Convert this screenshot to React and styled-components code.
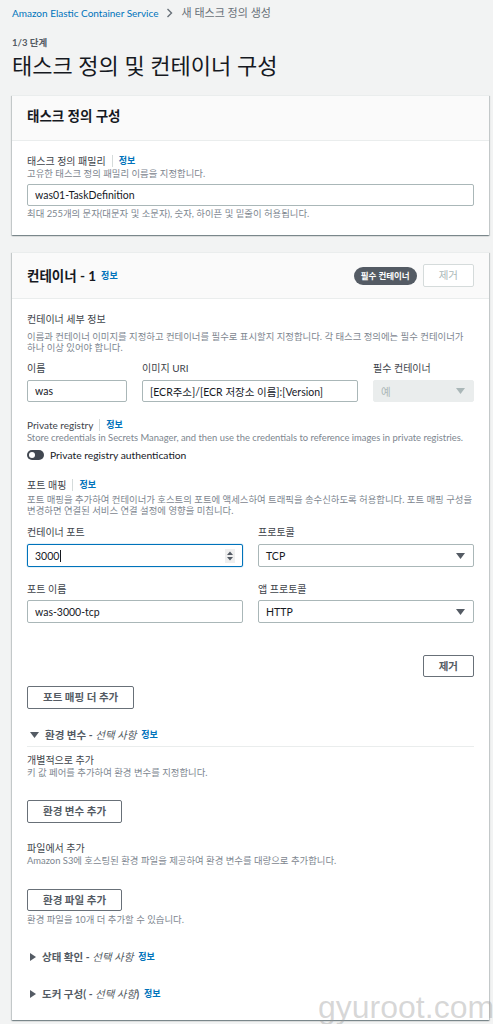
import React from 'react'
import styled, { createGlobalStyle } from 'styled-components'

const GlobalStyle = createGlobalStyle`
  html, body {
    margin: 0;
    padding: 0;
    background: #f2f3f3;
  }
  body {
    font-family: Lato, "Noto Sans CJK KR", sans-serif;
    color: #16191f;
  }
  * {
    box-sizing: border-box;
  }
`

const Page = styled.div`
  position: relative;
  padding: 7px 4px 6px 12px;
  min-height: 1024px;
  overflow: hidden;
`

const Breadcrumb = styled.nav`
  display: flex;
  align-items: center;
  gap: 8px;
  font-size: 10px;
  line-height: 12px;
`

const Crumb = styled.a`
  color: #0073bb;
  text-decoration: none;
`

const CurrentCrumb = styled.span`
  color: #687078;
  font-size: 11px;
`

const Step = styled.div`
  margin-top: 18px;
  font-size: 9.5px;
  line-height: 12px;
  font-weight: 700;
  color: #545b64;
`

const Title = styled.h1`
  margin: 4px 0 0;
  font-size: 22px;
  line-height: 26px;
  font-weight: 400;
  color: #16191f;
`

const Panel = styled.section`
  margin-top: ${p => p.$mt}px;
  background: #fff;
  border-top: 1px solid #eaeded;
  box-shadow: 0 1px 1px 0 rgba(0, 28, 36, 0.3), 1px 1px 1px 0 rgba(0, 28, 36, 0.15),
    -1px 1px 1px 0 rgba(0, 28, 36, 0.15);
`

const PanelHeader = styled.header`
  display: flex;
  align-items: center;
  height: ${p => p.$h}px;
  padding: 0 15px ${p => p.$pb || 0}px;
  background: #fafafa;
  border-bottom: 1px solid #eaeded;
`

const PanelTitle = styled.h2`
  margin: 0;
  font-size: ${p => p.$size || 13.5}px;
  line-height: 18px;
  font-weight: 700;
  color: #16191f;
`

const HeaderActions = styled.div`
  margin-left: auto;
  display: flex;
  align-items: center;
  gap: 6px;
`

const Badge = styled.span`
  height: 18px;
  padding: 0 7px;
  border-radius: 9px;
  background: #545b64;
  color: #fff;
  font-size: 8.5px;
  font-weight: 700;
  line-height: 18px;
`

const PanelBody = styled.div`
  padding: 14px 15px ${p => p.$pb || 15}px;
`

const Label = styled.div`
  display: flex;
  align-items: center;
  margin-top: ${p => p.$mt || 0}px;
  font-size: 10px;
  line-height: 12px;
  color: #3d434a;
`

const Info = styled.a`
  margin-left: ${p => (p.$plain ? 5 : 6)}px;
  padding-left: ${p => (p.$plain ? 0 : 6)}px;
  border-left: ${p => (p.$plain ? 'none' : '1px solid #d5dbdb')};
  color: #0073bb;
  font-size: 9px;
  font-weight: 700;
  font-style: normal;
  line-height: 12px;
  text-decoration: none;
`

const Desc = styled.p`
  margin: ${p => p.$mt || 0}px 0 0;
  font-size: 9.4px;
  line-height: ${p => p.$lh || 12}px;
  color: #7d868f;
  word-break: break-all;
`

const TextInput = styled.input`
  display: block;
  width: 100%;
  height: ${p => p.$h || 22}px;
  margin-top: ${p => p.$mt || 0}px;
  padding: 0 7px;
  border: 1px solid #aab7b8;
  border-radius: 2px;
  background: #fff;
  font-family: inherit;
  font-size: 10.5px;
  color: #16191f;
  outline: none;
`

const FocusField = styled.div`
  display: flex;
  align-items: center;
  height: 23px;
  margin-top: 6px;
  padding: 0 7px;
  border: 1px solid #0073bb;
  border-radius: 2px;
  box-shadow: 0 0 1px 0 #0073bb;
  font-size: 10.5px;
`

const Caret = styled.span`
  width: 1px;
  height: 12px;
  margin-left: 1px;
  background: #16191f;
`

const Spinner = styled.span`
  display: flex;
  align-items: center;
  justify-content: center;
  margin-left: auto;
  width: 10px;
  height: 14px;
  background: #efefef;
`

const SelectBox = styled.div`
  display: flex;
  align-items: center;
  height: ${p => p.$h || 23}px;
  margin-top: ${p => p.$mt || 0}px;
  padding: 0 8px 0 7px;
  border: 1px solid ${p => (p.$disabled ? '#eaeded' : '#aab7b8')};
  border-radius: 2px;
  background: ${p => (p.$disabled ? '#eaeded' : '#fff')};
  color: ${p => (p.$disabled ? '#aab7b8' : '#16191f')};
  font-size: 10.5px;

  svg {
    margin-left: auto;
  }
`

const Grid = styled.div`
  display: grid;
  grid-template-columns: ${p => p.$cols};
  column-gap: 15px;
  margin-top: ${p => p.$mt}px;
`

const ToggleRow = styled.div`
  display: flex;
  align-items: center;
  gap: 6px;
  margin-top: 4px;
  font-size: 10.3px;
  line-height: 14px;
  color: #16191f;
`

const Toggle = styled.span`
  display: flex;
  align-items: center;
  width: 17px;
  height: 10px;
  padding: 0 2px;
  border-radius: 5px;
  background: #414750;

  &::before {
    content: '';
    width: 6px;
    height: 6px;
    border-radius: 50%;
    background: #fff;
  }
`

const Button = styled.button`
  display: block;
  height: ${p => p.$h || 23}px;
  margin: ${p => p.$mt || 0}px 0 0 ${p => (p.$right ? 'auto' : '0')};
  padding: 0 15px;
  border: 1px solid ${p => (p.$disabled ? '#d5dbdb' : '#687078')};
  border-radius: 2px;
  background: #fff;
  color: ${p => (p.$disabled ? '#aab7b8' : '#545b64')};
  font-family: inherit;
  font-size: 10.5px;
  font-weight: ${p => (p.$disabled ? 400 : 700)};
  line-height: 1;
  cursor: pointer;
`

const Expander = styled.div`
  display: flex;
  align-items: center;
  margin-top: ${p => p.$mt}px;
  padding: 0 0 ${p => (p.$divider ? 4 : 0)}px 3px;
  border-bottom: ${p => (p.$divider ? '1px solid #eaeded' : 'none')};
  font-size: 10.5px;
  font-weight: 700;
  line-height: 14px;
  color: #545b64;

  svg {
    margin-right: 6px;
  }

  em {
    font-style: italic;
    font-weight: 400;
  }
`

const Watermark = styled.div`
  position: absolute;
  top: 991px;
  left: 318px;
  font-family: "Liberation Sans", Arial, sans-serif;
  font-size: 32px;
  line-height: 1;
  color: rgba(150, 150, 150, 0.38);
  pointer-events: none;
  white-space: nowrap;
`

const Chevron = () => (
  <svg width="7" height="10" viewBox="0 0 7 10">
    <path d="M1.5 1l4 4-4 4" fill="none" stroke="#687078" strokeWidth="1.4" />
  </svg>
)

const DownArrow = ({ color = '#545b64' }) => (
  <svg width="9" height="6" viewBox="0 0 9 6">
    <path d="M0 0h9L4.5 6z" fill={color} />
  </svg>
)

const RightArrow = () => (
  <svg width="6" height="8" viewBox="0 0 6 8">
    <path d="M0 0l6 4-6 4z" fill="#545b64" />
  </svg>
)

const SpinArrows = () => (
  <svg width="6" height="10" viewBox="0 0 6 10">
    <path d="M0 4l3-3.5L6 4zM0 6l3 3.5L6 6z" fill="#545b64" />
  </svg>
)

const App = () => (
  <Page>
    <GlobalStyle />
    <Breadcrumb>
      <Crumb href="#">Amazon Elastic Container Service</Crumb>
      <Chevron />
      <CurrentCrumb>새 태스크 정의 생성</CurrentCrumb>
    </Breadcrumb>
    <Step>1/3 단계</Step>
    <Title>태스크 정의 및 컨테이너 구성</Title>

    <Panel $mt={16}>
      <PanelHeader $h={45} $pb={4}>
        <PanelTitle>태스크 정의 구성</PanelTitle>
      </PanelHeader>
      <PanelBody>
        <Label>
          태스크 정의 패밀리<Info href="#">정보</Info>
        </Label>
        <Desc $mt={1}>고유한 태스크 정의 패밀리 이름을 지정합니다.</Desc>
        <TextInput $mt={4} defaultValue="was01-TaskDefinition" />
        <Desc $mt={2}>최대 255개의 문자(대문자 및 소문자), 숫자, 하이픈 및 밑줄이 허용됩니다.</Desc>
      </PanelBody>
    </Panel>

    <Panel $mt={17}>
      <PanelHeader $h={46}>
        <PanelTitle $size={13.5}>컨테이너 - 1</PanelTitle>
        <Info href="#" $plain>정보</Info>
        <HeaderActions>
          <Badge>필수 컨테이너</Badge>
          <Button $disabled>제거</Button>
        </HeaderActions>
      </PanelHeader>
      <PanelBody $pb={19}>
        <Label>컨테이너 세부 정보</Label>
        <Desc $mt={6} $lh={11}>
          이름과 컨테이너 이미지를 지정하고 컨테이너를 필수로 표시할지 지정합니다. 각 태스크 정의에는 필수 컨테이너가 하나 이상 있어야 합니다.
        </Desc>

        <Grid $mt={9} $cols="100px 216px 1fr">
          <div>
            <Label>이름</Label>
            <TextInput $mt={6} defaultValue="was" />
          </div>
          <div>
            <Label>이미지 URI</Label>
            <TextInput $mt={6} defaultValue="[ECR주소]/[ECR 저장소 이름]:[Version]" />
          </div>
          <div>
            <Label>필수 컨테이너</Label>
            <SelectBox $mt={6} $h={22} $disabled>
              예<DownArrow color="#aab7b8" />
            </SelectBox>
          </div>
        </Grid>

        <Label $mt={17}>
          Private registry<Info href="#">정보</Info>
        </Label>
        <Desc $mt={1}>
          Store credentials in Secrets Manager, and then use the credentials to reference images in private registries.
        </Desc>
        <ToggleRow>
          <Toggle />
          Private registry authentication
        </ToggleRow>

        <Label $mt={17}>
          포트 매핑<Info href="#">정보</Info>
        </Label>
        <Desc $mt={3} $lh={11}>
          포트 매핑을 추가하여 컨테이너가 호스트의 포트에 액세스하여 트래픽을 송수신하도록 허용합니다. 포트 매핑 구성을 변경하면 연결된 서비스 연결 설정에 영향을 미칩니다.
        </Desc>

        <Grid $mt={10} $cols="1fr 1fr">
          <div>
            <Label>컨테이너 포트</Label>
            <FocusField>
              3000<Caret />
              <Spinner>
                <SpinArrows />
              </Spinner>
            </FocusField>
          </div>
          <div>
            <Label>프로토콜</Label>
            <SelectBox $mt={6}>
              TCP<DownArrow />
            </SelectBox>
          </div>
        </Grid>

        <Grid $mt={16} $cols="1fr 1fr">
          <div>
            <Label>포트 이름</Label>
            <TextInput $mt={5} $h={23} defaultValue="was-3000-tcp" />
          </div>
          <div>
            <Label>앱 프로토콜</Label>
            <SelectBox $mt={5}>
              HTTP<DownArrow />
            </SelectBox>
          </div>
        </Grid>

        <Button $mt={32} $h={22} $right>제거</Button>
        <Button $mt={9}>포트 매핑 더 추가</Button>

        <Expander $mt={19} $divider>
          <DownArrow />
          환경 변수 -&nbsp;<em>선택 사항</em>
          <Info href="#" $plain>정보</Info>
        </Expander>
        <Label $mt={7}>개별적으로 추가</Label>
        <Desc $mt={1}>키 값 페어를 추가하여 환경 변수를 지정합니다.</Desc>
        <Button $mt={21}>환경 변수 추가</Button>

        <Label $mt={19}>파일에서 추가</Label>
        <Desc $mt={1}>Amazon S3에 호스팅된 환경 파일을 제공하여 환경 변수를 대량으로 추가합니다.</Desc>
        <Button $mt={22} $h={22}>환경 파일 추가</Button>
        <Desc $mt={3}>환경 파일을 10개 더 추가할 수 있습니다.</Desc>

        <Expander $mt={24}>
          <RightArrow />
          상태 확인 -&nbsp;<em>선택 사항</em>
          <Info href="#" $plain>정보</Info>
        </Expander>
        <Expander $mt={23}>
          <RightArrow />
          도커 구성( -&nbsp;<em>선택 사항</em>)
          <Info href="#" $plain>정보</Info>
        </Expander>
      </PanelBody>
    </Panel>

    <Watermark>gyuroot.com</Watermark>
  </Page>
)

export default App
